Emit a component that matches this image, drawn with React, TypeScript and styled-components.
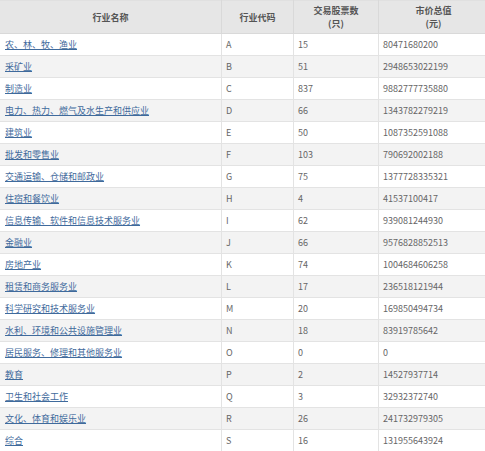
import React from "react";
import styled, { createGlobalStyle } from "styled-components";

const Global = createGlobalStyle`
  html, body { margin: 0; padding: 0; background: #fff; }
  body { font-family: "Noto Sans CJK SC", "Noto Sans", sans-serif; }
`;

const Table = styled.table`
  width: 485px;
  border-collapse: collapse;
  table-layout: fixed;
  font-size: 9px;
  color: #666;
`;

const HeadCell = styled.th<{ $w: number }>`
  width: ${(p) => p.$w}px;
  height: 32px;
  padding: 0;
  background: #e6e6e6;
  color: #555;
  font-weight: 600;
  font-size: 9px;
  line-height: 13px;
  text-align: center;
  vertical-align: middle;
  border: 1px solid #d9d9d9;
  border-top: 1px solid #e0e0e0;
  &:first-child { border-left: none; }
  &:last-child { border-right: none; }
`;

const Row = styled.tr<{ $alt: boolean }>`
  background: ${(p) => (p.$alt ? "#f3f3f3" : "#ffffff")};
`;

const Cell = styled.td`
  height: 21px;
  padding: 0 0 0 4px;
  border: 1px solid #e3e3e3;
  vertical-align: middle;
  white-space: nowrap;
  overflow: hidden;
  line-height: 21px;
  &:first-child { border-left: none; padding-left: 5px; }
  &:last-child { border-right: none; }
`;

const Link = styled.a`
  color: #3f6a9c;
  text-decoration: underline;
  text-underline-offset: 1px;
`;

const rows: [string, string, string, string][] = [
  ["农、林、牧、渔业", "A", "15", "80471680200"],
  ["采矿业", "B", "51", "2948653022199"],
  ["制造业", "C", "837", "9882777735880"],
  ["电力、热力、燃气及水生产和供应业", "D", "66", "1343782279219"],
  ["建筑业", "E", "50", "1087352591088"],
  ["批发和零售业", "F", "103", "790692002188"],
  ["交通运输、仓储和邮政业", "G", "75", "1377728335321"],
  ["住宿和餐饮业", "H", "4", "41537100417"],
  ["信息传输、软件和信息技术服务业", "I", "62", "939081244930"],
  ["金融业", "J", "66", "9576828852513"],
  ["房地产业", "K", "74", "1004684606258"],
  ["租赁和商务服务业", "L", "17", "236518121944"],
  ["科学研究和技术服务业", "M", "20", "169850494734"],
  ["水利、环境和公共设施管理业", "N", "18", "83919785642"],
  ["居民服务、修理和其他服务业", "O", "0", "0"],
  ["教育", "P", "2", "14527937714"],
  ["卫生和社会工作", "Q", "3", "32932372740"],
  ["文化、体育和娱乐业", "R", "26", "241732979305"],
  ["综合", "S", "16", "131955643924"],
];

export default function App() {
  return (
    <>
      <Global />
      <Table>
        <thead>
          <tr>
            <HeadCell $w={221}>行业名称</HeadCell>
            <HeadCell $w={71}>行业代码</HeadCell>
            <HeadCell $w={84}>
              交易股票数
              <br />
              (只)
            </HeadCell>
            <HeadCell $w={109}>
              市价总值
              <br />
              (元)
            </HeadCell>
          </tr>
        </thead>
        <tbody>
          {rows.map(([name, code, count, value], i) => (
            <Row key={code} $alt={i % 2 === 1}>
              <Cell>
                <Link href="#">{name}</Link>
              </Cell>
              <Cell>{code}</Cell>
              <Cell>{count}</Cell>
              <Cell>{value}</Cell>
            </Row>
          ))}
        </tbody>
      </Table>
    </>
  );
}
